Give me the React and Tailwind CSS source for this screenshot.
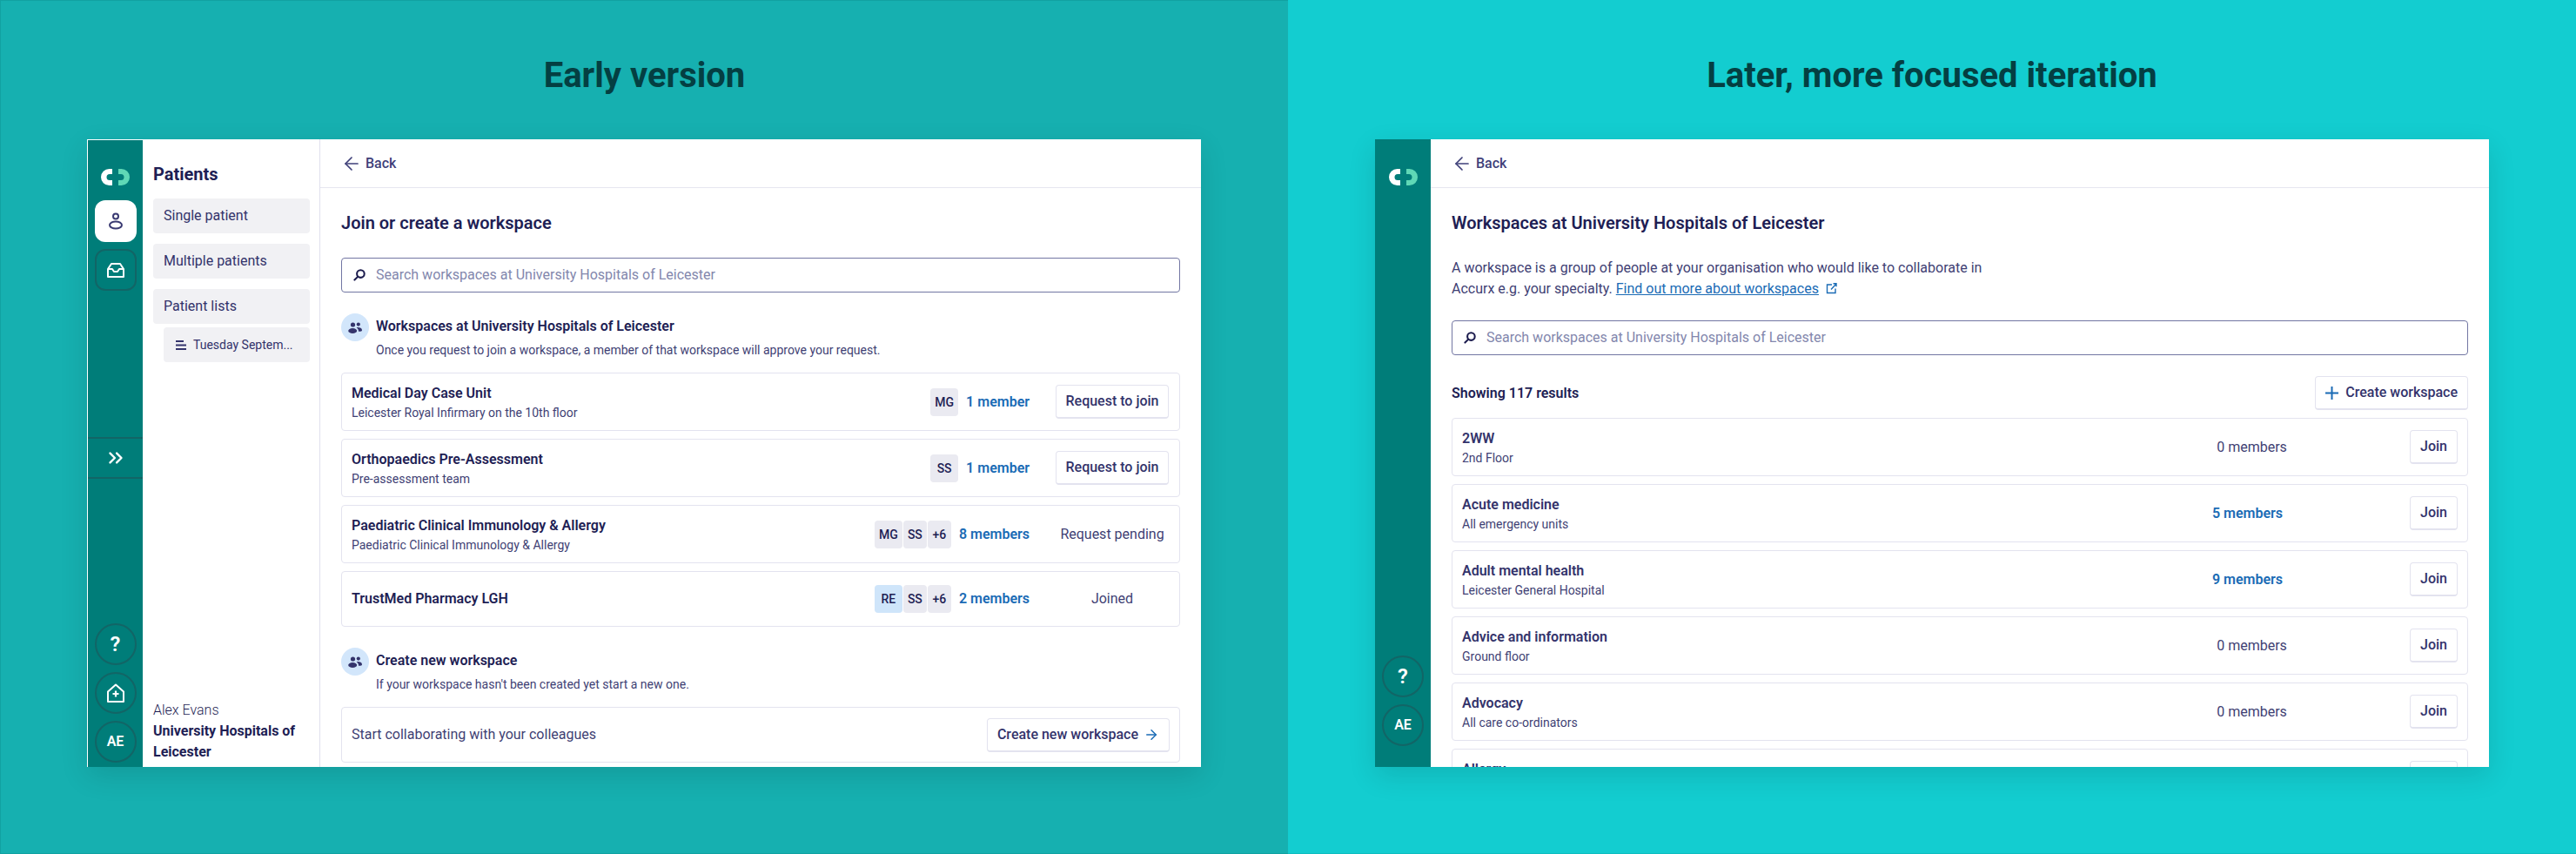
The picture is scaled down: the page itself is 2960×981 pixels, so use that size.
import { ArrowLeft, ArrowRight, ChevronsRight } from "lucide-react"

const earlyRows = [
  { name: "Medical Day Case Unit", place: "Leicester Royal Infirmary on the 10th floor", avatars: ["MG"], members: "1 member", action: "Request to join" },
  { name: "Orthopaedics Pre-Assessment", place: "Pre-assessment team", avatars: ["SS"], members: "1 member", action: "Request to join" },
  { name: "Paediatric Clinical Immunology & Allergy", place: "Paediatric Clinical Immunology & Allergy", avatars: ["MG", "SS", "+6"], members: "8 members", status: "Request pending" },
  { name: "TrustMed Pharmacy LGH", avatars: ["RE", "SS", "+6"], members: "2 members", status: "Joined", self: true },
]

const laterRows = [
  { name: "2WW", place: "2nd Floor", count: 0 },
  { name: "Acute medicine", place: "All emergency units", count: 5 },
  { name: "Adult mental health", place: "Leicester General Hospital", count: 9 },
  { name: "Advice and information", place: "Ground floor", count: 0 },
  { name: "Advocacy", place: "All care co-ordinators", count: 0 },
  { name: "Allergy", place: "", count: 0 },
]

function Logo() {
  return (
    <svg width="33" height="19" viewBox="0 0 33 19" className="shrink-0">
      <path d="M13 0H9.5A9.5 9.5 0 0 0 9.5 19H13V13H10A3.5 3.5 0 0 1 10 6H13Z" fill="#ffffff" />
      <path d="M20 0H23.5A9.5 9.5 0 0 1 23.5 19H20V13H23A3.5 3.5 0 0 0 23 6H20Z" fill="#5fd8b6" />
    </svg>
  )
}

function PatientIcon() {
  return (
    <svg width="18" height="20" viewBox="0 0 18 20" fill="none" stroke="#3a3a72" strokeWidth="2">
      <circle cx="9" cy="4.5" r="3" />
      <ellipse cx="9" cy="14.5" rx="7" ry="4" />
    </svg>
  )
}

function InboxIcon() {
  return (
    <svg width="20" height="17" viewBox="0 0 20 17" fill="none" stroke="#ffffff" strokeWidth="2" strokeLinejoin="round">
      <path d="M5 1h10l4 6v9H1V7Z" />
      <path d="M1 7h5l2 3h4l2-3h5" />
    </svg>
  )
}

function HospitalIcon() {
  return (
    <svg width="20" height="22" viewBox="0 0 20 22" fill="none" stroke="#ffffff" strokeWidth="2" strokeLinejoin="round">
      <path d="M1 9.5 10 1.5l9 8V21H1Z" />
      <path d="M10 8.5v7M6.5 12h7" strokeWidth="2.2" />
    </svg>
  )
}

function PeopleIcon() {
  return (
    <svg width="16" height="13" viewBox="0 0 16 13" fill="#34346c">
      <circle cx="5.5" cy="3" r="2.6" />
      <circle cx="11.8" cy="2.6" r="2.1" />
      <ellipse cx="5.2" cy="10" rx="5" ry="3" />
      <path d="M11 6c2.6 0 5 1.2 5 3.2 0 1-1 1.6-4 1.6 0-2-.6-3.4-2.4-4.6.4-.1.9-.2 1.4-.2Z" />
    </svg>
  )
}

function SearchIcon() {
  return (
    <svg width="14" height="14" viewBox="0 0 15 15" fill="none" stroke="#1b1b4d" strokeWidth="2.2" strokeLinecap="round" className="shrink-0">
      <circle cx="9" cy="6" r="4.6" />
      <path d="M5.5 9.5 1.5 13.5" />
    </svg>
  )
}

function ListIcon() {
  return (
    <svg width="12" height="11" viewBox="0 0 12 11" fill="#34346c" className="shrink-0">
      <rect width="9" height="2" />
      <rect y="4.5" width="12" height="2" />
      <rect y="9" width="12" height="2" />
    </svg>
  )
}

function LinkOutIcon() {
  return (
    <svg width="13" height="13" viewBox="0 0 13 13" fill="none" stroke="#1a6bb5" strokeWidth="1.4" className="shrink-0">
      <path d="M7 2H1.5v9.5H11V6.5" />
      <path d="M6 7.5 12 1M8.5 .8H12v3.4" />
    </svg>
  )
}

function PlusIcon() {
  return (
    <svg width="15" height="15" viewBox="0 0 15 15" fill="none" stroke="#1a6bb5" strokeWidth="2" className="mr-0.5 shrink-0">
      <path d="M7.5 0v15M0 7.5h15" />
    </svg>
  )
}

function RailButton({ children, round, light }) {
  return (
    <div
      className={`flex h-12 w-12 items-center justify-center text-base font-semibold text-white ${
        light ? "bg-white" : "border-2 border-[#126566]"
      } ${round ? "rounded-full" : "rounded-xl"}`}
    >
      {children}
    </div>
  )
}

function OutlineButton({ children }) {
  return (
    <div className="flex h-[39px] shrink-0 items-center gap-1.5 rounded border border-b-2 border-[#e3e3ef] bg-white px-[11px] text-base font-medium whitespace-nowrap text-[#33336b]">
      {children}
    </div>
  )
}

function SearchBox() {
  return (
    <div className="flex h-10 items-center gap-3 rounded border border-[#7276a3] pl-[13px] text-base text-[#8387ad]">
      <SearchIcon />
      <span>Search workspaces at University Hospitals of Leicester</span>
    </div>
  )
}

function BackBar() {
  return (
    <div className="flex h-14 shrink-0 items-center gap-1 border-b border-[#e6e6f0] px-6 text-base font-medium text-[#3f4079]">
      <ArrowLeft size={24} strokeWidth={1.7} />
      <span>Back</span>
    </div>
  )
}

function SectionHead({ title, sub }) {
  return (
    <div className="flex gap-2">
      <div className="flex h-8 w-8 shrink-0 items-center justify-center rounded-full bg-[#d2e6fb]">
        <PeopleIcon />
      </div>
      <div className="pt-[3px]">
        <div className="text-base leading-6 font-semibold text-[#1e1e54]">{title}</div>
        <div className="mt-[5px] text-sm leading-5 text-[#3f3f74]">{sub}</div>
      </div>
    </div>
  )
}

function Avatar({ label, index, self }) {
  return (
    <div
      className={`flex h-8 items-center justify-center rounded text-sm font-medium text-[#1e1e54] ${
        index === 0 ? "w-8" : "w-[27px]"
      } ${self && index === 0 ? "bg-[#cfe5fa]" : "bg-[#eaeaf1]"}`}
    >
      {label}
    </div>
  )
}

function EarlyRow({ row, short }) {
  return (
    <div className={`flex items-center rounded border border-[#e3e3ef] px-[11px] ${short ? "h-[64px]" : "h-[67px]"}`}>
      <div className="flex-1">
        <div className="text-base leading-6 font-semibold text-[#1e1e54]">{row.name}</div>
        {row.place && <div className="text-sm leading-5 text-[#3f3f74]">{row.place}</div>}
      </div>
      <div className="flex gap-px">
        {row.avatars.map((label, i) => (
          <Avatar key={label} label={label} index={i} self={row.self} />
        ))}
      </div>
      <div className="ml-[9px] text-base font-semibold text-[#1a6bb5]">{row.members}</div>
      <div className="ml-[29px] flex w-[132px] justify-center text-base text-[#3f3f74]">
        {row.action ? <OutlineButton>{row.action}</OutlineButton> : row.status}
      </div>
    </div>
  )
}

function LaterRow({ row }) {
  return (
    <div className="flex h-[67px] shrink-0 items-center rounded border border-[#e3e3ef] px-[11px]">
      <div className="w-[726px]">
        <div className="text-base leading-6 font-semibold text-[#33336b]">{row.name}</div>
        <div className="min-h-5 text-sm leading-5 text-[#3f3f74]">{row.place}</div>
      </div>
      <div className="flex flex-1 justify-center">
        {row.count > 0 ? (
          <span className="mr-[10px] text-base font-semibold text-[#1a6bb5]">{row.count} members</span>
        ) : (
          <span className="text-base text-[#3f3f74]">0 members</span>
        )}
      </div>
      <OutlineButton>Join</OutlineButton>
    </div>
  )
}

function SideItem({ children }) {
  return <div className="flex h-10 items-center rounded bg-[#f1f1f4] px-3 text-base text-[#33336b]">{children}</div>
}

function EarlyWindow() {
  return (
    <div className="mr-[100px] ml-[99px] flex h-[721px] overflow-hidden bg-white shadow-[0_10px_30px_rgba(0,0,0,0.12)]">
      <div className="flex w-16 shrink-0 flex-col items-center border-t border-l border-white bg-[#007d79] pb-[5px]">
        <div className="mt-[33px]"><Logo /></div>
        <div className="mt-[17px] flex flex-col gap-2">
          <RailButton light><PatientIcon /></RailButton>
          <RailButton><InboxIcon /></RailButton>
        </div>
        <div className="mt-[168px] flex h-12 w-full items-center justify-center border-y-2 border-[#126566]">
          <ChevronsRight size={26} color="#ffffff" strokeWidth={2.2} />
        </div>
        <div className="mt-auto flex flex-col gap-2">
          <RailButton round><span className="text-2xl">?</span></RailButton>
          <RailButton round><HospitalIcon /></RailButton>
          <RailButton round>AE</RailButton>
        </div>
      </div>

      <div className="flex w-[204px] shrink-0 flex-col border-r border-[#e0e0ee] pr-[11px] pl-3 text-[#1e1e54]">
        <div className="pt-[26px] text-xl leading-7 font-bold">Patients</div>
        <div className="mt-[14px] flex flex-col gap-3">
          <SideItem>Single patient</SideItem>
          <SideItem>Multiple patients</SideItem>
          <div>
            <SideItem>Patient lists</SideItem>
            <div className="mt-1 ml-3 flex h-10 items-center gap-2 rounded bg-[#f1f1f4] pl-[14px] text-sm text-[#33336b]">
              <ListIcon />
              <span>Tuesday Septem...</span>
            </div>
          </div>
        </div>
        <div className="mt-auto pb-[5px] text-base leading-6">
          <div className="font-light">Alex Evans</div>
          <div className="font-bold">University Hospitals of Leicester</div>
        </div>
      </div>

      <div className="flex flex-1 flex-col">
        <BackBar />
        <div className="px-6">
          <div className="pt-[26px] text-xl leading-7 font-semibold text-[#1e1e54]">Join or create a workspace</div>
          <div className="mt-[26px]"><SearchBox /></div>
          <div className="mt-6">
            <SectionHead
              title="Workspaces at University Hospitals of Leicester"
              sub="Once you request to join a workspace, a member of that workspace will approve your request."
            />
          </div>
          <div className="mt-4 flex flex-col gap-[9px]">
            {earlyRows.map((row, i) => (
              <EarlyRow key={row.name} row={row} short={i === 3} />
            ))}
          </div>
          <div className="mt-[24px]">
            <SectionHead title="Create new workspace" sub="If your workspace hasn't been created yet start a new one." />
          </div>
          <div className="mt-[16px] flex h-[64px] items-center justify-between rounded border border-[#e3e3ef] px-[11px] text-base text-[#3f3f74]">
            <span>Start collaborating with your colleagues</span>
            <OutlineButton>
              Create new workspace
              <ArrowRight size={18} color="#1a6bb5" strokeWidth={2} />
            </OutlineButton>
          </div>
        </div>
      </div>
    </div>
  )
}

function LaterWindow() {
  return (
    <div className="mx-[100px] flex h-[721px] overflow-hidden bg-white shadow-[0_10px_30px_rgba(0,0,0,0.12)]">
      <div className="flex w-16 shrink-0 flex-col items-center bg-[#007d79] pb-6">
        <div className="mt-[34px]"><Logo /></div>
        <div className="mt-auto flex flex-col gap-2">
          <RailButton round><span className="text-2xl">?</span></RailButton>
          <RailButton round>AE</RailButton>
        </div>
      </div>
      <div className="flex flex-1 flex-col">
        <BackBar />
        <div className="flex flex-col px-6">
          <div className="pt-[26px] text-xl leading-7 font-semibold text-[#1e1e54]">
            Workspaces at University Hospitals of Leicester
          </div>
          <p className="mt-[26px] w-[650px] text-base leading-6 text-[#3f3f74]">
            A workspace is a group of people at your organisation who would like to collaborate in Accurx e.g. your specialty.{" "}
            <span className="text-[#1a6bb5] underline">Find out more about workspaces</span>
            <span className="ml-2 inline-block align-[-1px]"><LinkOutIcon /></span>
          </p>
          <div className="mt-6"><SearchBox /></div>
          <div className="mt-6 flex items-center justify-between">
            <span className="text-base font-semibold text-[#1e1e54]">Showing 117 results</span>
            <OutlineButton>
              <PlusIcon />
              Create workspace
            </OutlineButton>
          </div>
          <div className="mt-[9px] flex flex-col gap-[9px]">
            {laterRows.map((row) => (
              <LaterRow key={row.name} row={row} />
            ))}
          </div>
        </div>
      </div>
    </div>
  )
}

function Panel({ title, tone, titleBox, children }) {
  return (
    <div className={`flex h-[981px] w-[1480px] shrink-0 flex-col overflow-hidden ${tone}`}>
      <h1 className={`text-center text-[40px] leading-[50px] font-bold text-[#043f42] ${titleBox}`}>{title}</h1>
      {children}
    </div>
  )
}

export default function App() {
  return (
    <div className="flex h-[981px] w-[2960px] overflow-hidden font-[Roboto,sans-serif]">
      <Panel title="Early version" titleBox="h-[159px] pt-[61px]" tone="border-t border-b border-l border-[#12a1a1] bg-[#16b0b0]">
        <EarlyWindow />
      </Panel>
      <Panel title="Later, more focused iteration" titleBox="h-[160px] pt-[62px]" tone="border-b border-[#10bcbf] bg-[#13cdd0]">
        <LaterWindow />
      </Panel>
    </div>
  )
}
